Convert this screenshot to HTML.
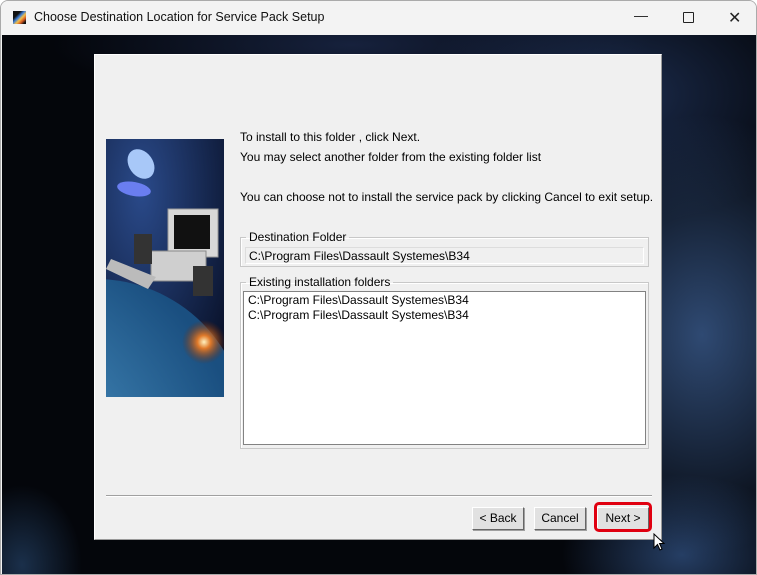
<!DOCTYPE html>
<html><head><meta charset="utf-8"><style>
*{margin:0;padding:0;box-sizing:border-box}
body{width:757px;height:575px;overflow:hidden;background:#fff;font-family:"Liberation Sans",sans-serif;font-size:12px;color:#000;position:relative}
.win{position:absolute;left:0;top:0;width:757px;height:575px;border:1px solid #aaa;border-radius:8px 8px 0 0;background:#f3f3f3;overflow:hidden}
.title{position:absolute;left:0;top:0;width:757px;height:34px;background:#f3f3f3}
.title .t{position:absolute;left:33px;top:9px;font-size:12.5px;color:#111}
.ico{position:absolute;left:12px;top:10px;width:13px;height:13px;background:linear-gradient(135deg,#111 30%,#3a7cd8 45%,#f2c04a 60%,#d85a20 75%,#111 90%)}
.ctl{position:absolute;top:10px;font-size:14px;color:#222}
.bg{position:absolute;left:1px;top:34px;width:754px;height:540px;background:
radial-gradient(ellipse 160px 220px at 700px 300px,rgba(70,110,170,.65),transparent),
radial-gradient(ellipse 200px 130px at 620px 60px,rgba(50,80,140,.5),transparent),
radial-gradient(ellipse 300px 60px at 350px 10px,rgba(40,60,110,.5),transparent),
radial-gradient(ellipse 120px 80px at 680px 520px,rgba(60,100,160,.6),transparent),
radial-gradient(ellipse 60px 80px at 20px 530px,rgba(60,110,170,.4),transparent),
#04060b}
.panel{position:absolute;left:94px;top:53px;width:568px;height:486px;background:#f0f0f0;border:1px solid #fff;border-right-color:#999;border-bottom-color:#999}
.txt{position:absolute;left:239px;font-size:12px}
fieldset{position:absolute;border:1px solid #c8c8c8;box-shadow:1px 1px 0 #fff inset}
legend{font-size:12px;padding:0 3px;margin-left:5px}
.box{position:absolute;font-size:12px}
.btn{position:absolute;top:506px;height:23px;background:#e1e1e1;border:1px solid #fff;border-right-color:#666;border-bottom-color:#666;box-shadow:1px 1px 0 #a0a0a0;font-size:12px;text-align:center;line-height:21px}
</style></head><body>
<div class="win">
<div class="title"><div class="ico"></div><div class="t">Choose Destination Location for Service Pack Setup</div>
<div class="ctl" style="left:633px;top:6px">—</div>
<div style="position:absolute;left:682px;top:11px;width:11px;height:11px;border:1px solid #222;border-radius:1px"></div>
<div class="ctl" style="left:727px;top:7px;font-size:16px">✕</div></div>
<div class="bg"></div>
<div class="panel" style="left:93px"></div>
<svg style="position:absolute;left:105px;top:138px" width="118" height="258" viewBox="0 0 118 258">
<defs><radialGradient id="sp" cx="0.3" cy="0.2" r="1"><stop offset="0" stop-color="#2a4a8a"/><stop offset="1" stop-color="#060c20"/></radialGradient>
<radialGradient id="gl" cx="0.1" cy="0.7" r="0.9"><stop offset="0" stop-color="#5aa8d8"/><stop offset="1" stop-color="#1a4f80"/></radialGradient>
<radialGradient id="fl"><stop offset="0" stop-color="#fff2c0"/><stop offset=".3" stop-color="#e07a2a"/><stop offset="1" stop-color="rgba(120,40,0,0)"/></radialGradient></defs>
<rect width="118" height="258" fill="url(#sp)"/>
<ellipse cx="35" cy="25" rx="12" ry="16" transform="rotate(-35 35 25)" fill="#a8c8f8"/>
<ellipse cx="28" cy="50" rx="17" ry="7" transform="rotate(10 28 50)" fill="#6a7ef0"/>
<circle cx="-10" cy="290" r="150" fill="url(#gl)"/>
<circle cx="98" cy="203" r="22" fill="url(#fl)"/>
<rect x="62" y="70" width="50" height="48" fill="#d8d8d8" stroke="#999"/>
<rect x="68" y="76" width="36" height="34" fill="#111"/>
<rect x="45" y="112" width="55" height="30" fill="#cfcfcf" stroke="#888"/>
<rect x="28" y="95" width="18" height="30" fill="#333"/>
<rect x="87" y="127" width="20" height="30" fill="#333"/>
<polygon points="5,120 50,138 42,150 0,130" fill="#bbb"/>
</svg>
<div class="txt" style="top:129px">To install to this folder , click Next.</div>
<div class="txt" style="top:149px">You may select another folder from the existing folder list</div>
<div class="txt" style="top:189px">You can choose not to install the service pack by clicking Cancel to exit setup.</div>
<fieldset style="left:239px;top:229px;width:409px;height:37px"><legend>Destination Folder</legend></fieldset>
<div class="box" style="left:244px;top:246px;width:399px;height:17px;border:1px solid #ddd;border-right-color:#fff;border-bottom-color:#fff;padding:1px 3px">C:\Program Files\Dassault Systemes\B34</div>
<fieldset style="left:239px;top:274px;width:409px;height:174px"><legend>Existing installation folders</legend></fieldset>
<div class="box" style="left:242px;top:290px;width:403px;height:154px;background:#fff;border:1px solid #828282;padding:1px 4px;line-height:15px">C:\Program Files\Dassault Systemes\B34<br>C:\Program Files\Dassault Systemes\B34</div>
<div style="position:absolute;left:105px;top:494px;width:546px;height:2px;border-top:1px solid #a0a0a0;border-bottom:1px solid #fff"></div>
<div class="btn" style="left:471px;width:52px">&lt; Back</div>
<div class="btn" style="left:533px;width:52px">Cancel</div>
<div class="btn" style="left:596px;width:52px">Next &gt;</div>
<div style="position:absolute;left:593px;top:501px;width:58px;height:30px;border:3px solid #e00010;border-radius:5px"></div>
<svg style="position:absolute;left:652px;top:532px" width="14" height="20"><path d="M1 1 L1 15 L4.5 11.5 L7 17 L9 16 L6.5 10.5 L11 10.5 Z" fill="#fff" stroke="#000"/></svg>
</div>
</body></html>
